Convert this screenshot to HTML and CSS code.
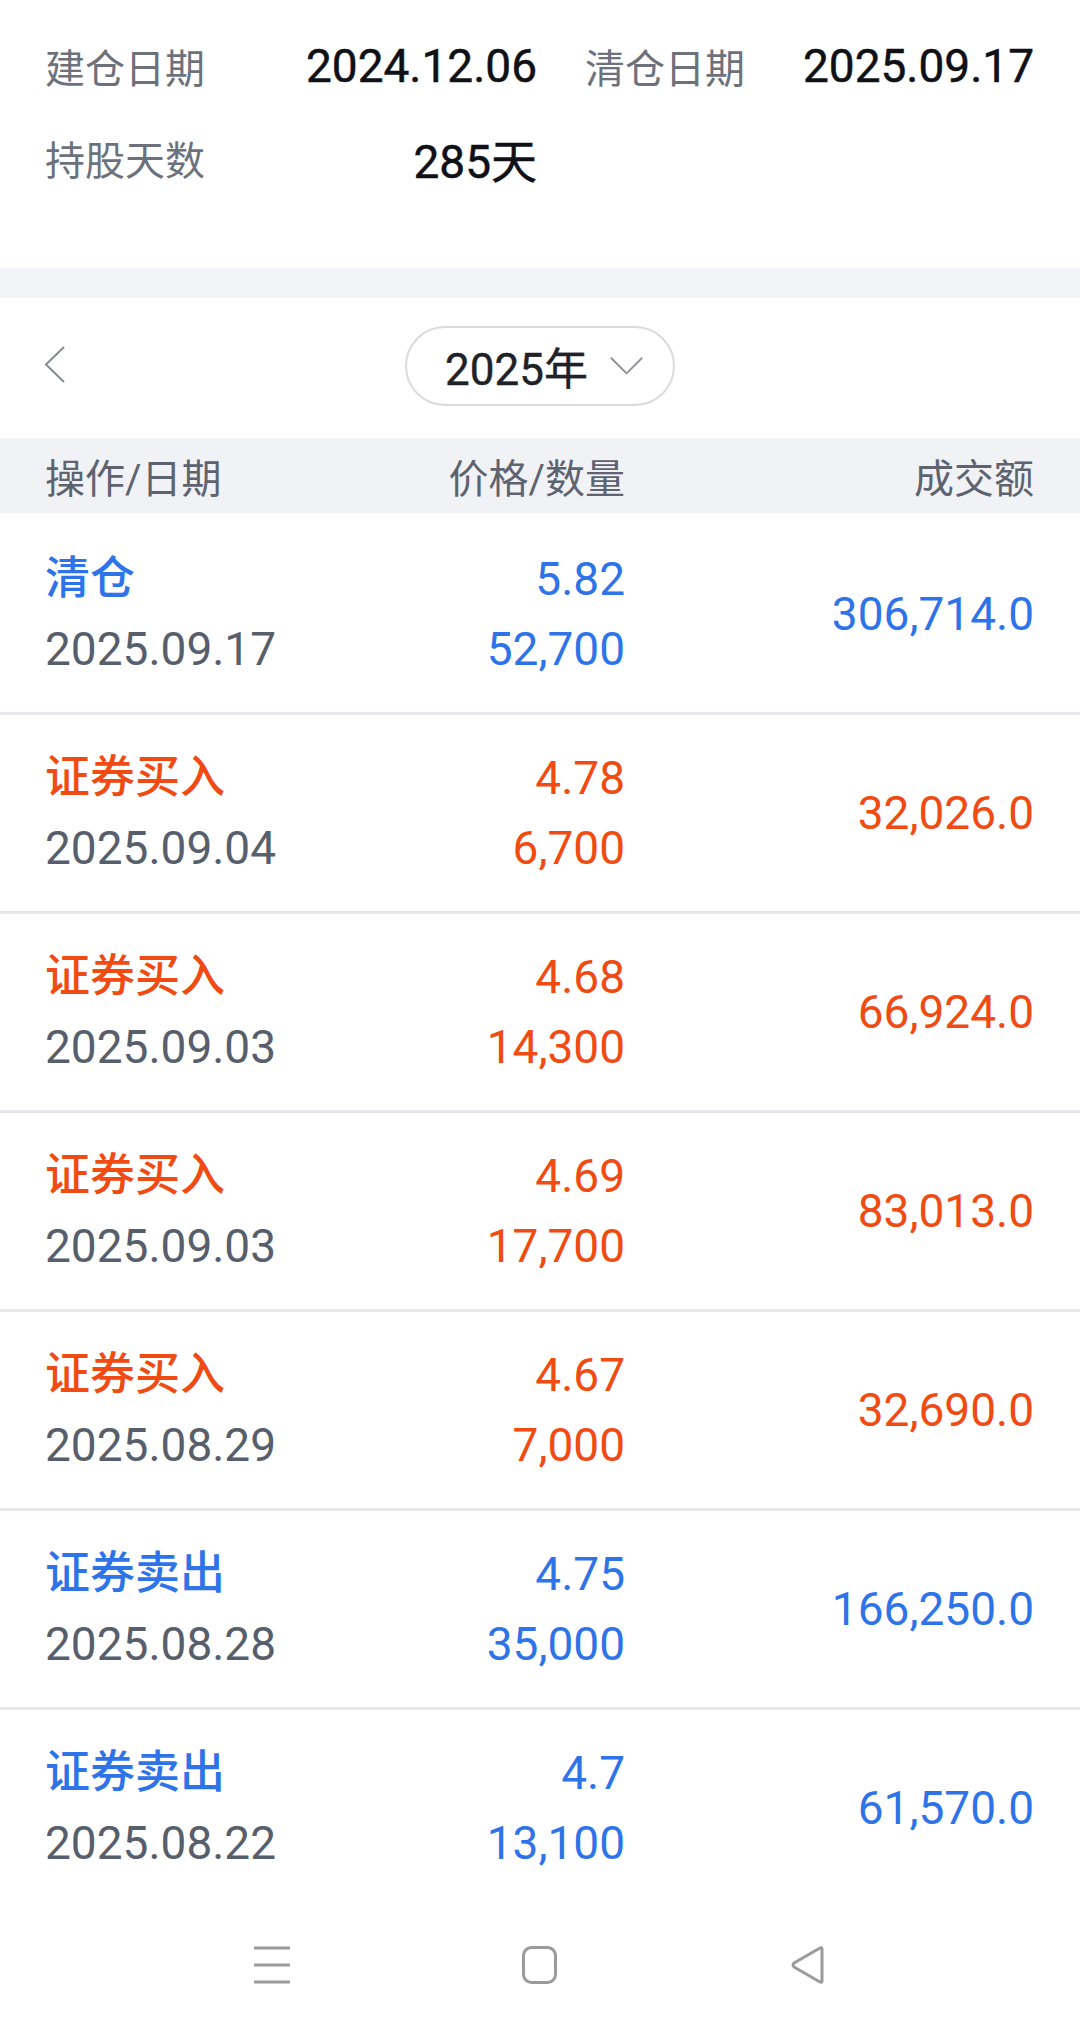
FILE: index.html
```html
<!doctype html>
<html lang="zh">
<head>
  <meta charset="UTF-8">
  <meta name="viewport" content="width=device-width, initial-scale=1.0">
  <title>持仓明细</title>
  <link rel="stylesheet" href="styles.css">
</head>
<body>
  <main class="page">
    <section class="summary">
      <div class="summary--item">
        <span class="summary--label">建仓日期</span>
        <span class="summary--value">2024.12.06</span>
      </div>
      <div class="summary--item">
        <span class="summary--label">清仓日期</span>
        <span class="summary--value">2025.09.17</span>
      </div>
      <div class="summary--item">
        <span class="summary--label">持股天数</span>
        <span class="summary--value">285天</span>
      </div>
    </section>

    <div class="divider"></div>

    <section class="toolbar">
      <button class="toolbar--back" type="button" aria-label="上一年">
        <svg width="20" height="37" viewBox="0 0 20 37">
          <polyline points="19,1 1,18.5 19,36" fill="none" stroke="#858a94" stroke-width="2" stroke-linejoin="round"/>
        </svg>
      </button>
      <button class="year-picker" type="button">
        <span>2025年</span>
        <svg width="36" height="20" viewBox="0 0 36 20">
          <polyline points="1,1 18,18 35,1" fill="none" stroke="#8d9097" stroke-width="2" stroke-linejoin="round"/>
        </svg>
      </button>
      <span></span>
    </section>

    <section class="trades">
      <div class="trades--head">
        <span>操作/日期</span>
        <span class="trades--num">价格/数量</span>
        <span class="trades--num">成交额</span>
      </div>
      <div class="trades--list"></div>
    </section>

    <nav class="navbar">
      <svg width="36" height="38" viewBox="0 0 36 38">
        <g stroke="#9b9b9b" stroke-width="3">
          <line x1="0" y1="2" x2="36" y2="2"/>
          <line x1="0" y1="19" x2="36" y2="19"/>
          <line x1="0" y1="36" x2="36" y2="36"/>
        </g>
      </svg>
      <svg width="36" height="38" viewBox="0 0 36 38">
        <rect x="1.5" y="1.5" width="32" height="35" rx="8" fill="none" stroke="#9b9b9b" stroke-width="3"/>
      </svg>
      <svg width="36" height="38" viewBox="0 0 36 38">
        <path d="M32 3 L32 35 Q32 37 30 36 L4 21 Q2 19 4 17 L30 2 Q32 1 32 3 Z" fill="none" stroke="#9b9b9b" stroke-width="3" stroke-linejoin="round"/>
      </svg>
    </nav>
  </main>

  <script>
    const trades = [
      ["清仓", "2025.09.17", "5.82", "52,700", "306,714.0", "sell"],
      ["证券买入", "2025.09.04", "4.78", "6,700", "32,026.0", "buy"],
      ["证券买入", "2025.09.03", "4.68", "14,300", "66,924.0", "buy"],
      ["证券买入", "2025.09.03", "4.69", "17,700", "83,013.0", "buy"],
      ["证券买入", "2025.08.29", "4.67", "7,000", "32,690.0", "buy"],
      ["证券卖出", "2025.08.28", "4.75", "35,000", "166,250.0", "sell"],
      ["证券卖出", "2025.08.22", "4.7", "13,100", "61,570.0", "sell"]
    ];

    const oList = document.querySelector(".trades--list");

    oList.innerHTML = trades.map(([action, date, price, qty, amount, side]) => `
      <div class="trades--row trades--row__${side}">
        <div class="trades--cell">
          <span class="trades--action">${action}</span>
          <span class="trades--date">${date}</span>
        </div>
        <div class="trades--cell trades--num">
          <span>${price}</span>
          <span>${qty}</span>
        </div>
        <div class="trades--cell trades--num">
          <span>${amount}</span>
        </div>
      </div>`).join("");
  </script>
</body>
</html>
```

FILE: styles.css
```css
* {
  box-sizing: border-box;
}

body {
  margin: 0;
  background-color: #fff;
  font-family: Roboto, "Noto Sans CJK SC", sans-serif;
  color: #15171c;
}

button {
  font: inherit;
  background: none;
  border: none;
  padding: 0;
  color: inherit;
}

.page {
  width: 1080px;
}

/* 顶部汇总 */
.summary {
  display: grid;
  grid-template-columns: 492px 449px;
  column-gap: 48px;
  row-gap: 32px;
  padding: 36px 46px 80px 45px;
}

.summary--item {
  display: flex;
  justify-content: space-between;
  align-items: center;
  height: 60px;
}

.summary--label {
  font-size: 40px;
  color: #6c717c;
}

.summary--value {
  font-size: 46px;
  color: #0f1116;
  -webkit-text-stroke: 0.5px #0f1116;
}

.divider {
  height: 30px;
  background-color: #f2f3f7;
}

/* 年份切换 */
.toolbar {
  display: grid;
  grid-template-columns: 1fr auto 1fr;
  align-items: center;
  padding: 28px 0 32px;
  height: 140px;
}

.toolbar--back {
  justify-self: start;
  margin-left: 45px;
  display: flex;
  margin-top: -3px;
}

.year-picker {
  display: flex;
  align-items: center;
  justify-content: center;
  gap: 22px;
  width: 270px;
  height: 80px;
  padding: 0 30px 0 38px;
  border: 2px solid #dadbde;
  border-radius: 40px;
  font-size: 44px;
  color: #1f2228;
  white-space: nowrap;
  -webkit-text-stroke: 0.4px #1f2228;
}

/* 交易列表 */
.trades--head,
.trades--row {
  display: grid;
  grid-template-columns: 300px 280px 1fr;
  padding: 0 46px 0 45px;
}

.trades--head {
  height: 75px;
  align-items: center;
  background-color: #f1f2f6;
  font-size: 40px;
  color: #5e6370;
}

.trades--num {
  text-align: right;
}

.trades--list {
  padding-top: 3px;
}

.trades--row {
  height: 199px;
  align-items: center;
  border-bottom: 3px solid #e7e8ec;
  font-size: 46px;
  line-height: 70px;
}

.trades--row:last-child {
  border-bottom: none;
  height: 196px;
}

.trades--cell {
  display: flex;
  flex-direction: column;
}

.trades--action {
  font-size: 45px;
  font-weight: 500;
}

.trades--date {
  color: #575e6c;
}

.trades--row__sell {
  color: #2e74e8;
}

.trades--row__buy {
  color: #ef4b13;
}

/* 系统导航栏 */
.navbar {
  display: flex;
  justify-content: center;
  gap: 232px;
  height: 125px;
  padding-top: 40px;
}
```
